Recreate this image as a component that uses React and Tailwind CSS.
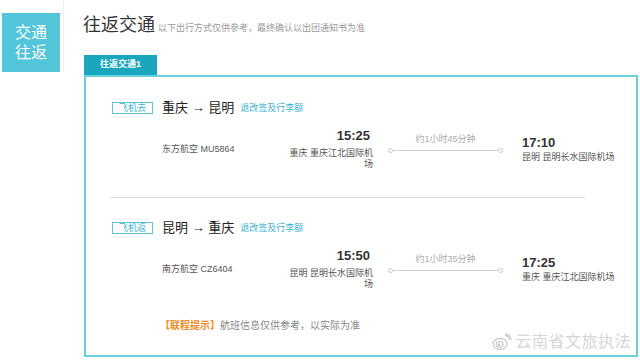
import React from 'react';

const flights = [
  {
    tag: '飞机去',
    route: ['重庆', '昆明'],
    airline: '东方航空 MU5864',
    depTime: '15:25',
    depAirport: '重庆 重庆江北国际机场',
    duration: '约1小时45分钟',
    arrTime: '17:10',
    arrAirport: '昆明 昆明长水国际机场',
  },
  {
    tag: '飞机返',
    route: ['昆明', '重庆'],
    airline: '南方航空 CZ6404',
    depTime: '15:50',
    depAirport: '昆明 昆明长水国际机场',
    duration: '约1小时35分钟',
    arrTime: '17:25',
    arrAirport: '重庆 重庆江北国际机场',
  },
];

function FlightBlock({ f, first }) {
  return (
    <div className={first ? 'h-[121px] pt-[25px] border-b border-[#dedede]' : 'h-[120px] pt-[24px]'}>
      {/* 航线标题 */}
      <div className="flex items-center h-[12px] ml-[2px]">
        <span className="w-[41px] h-[12px] border border-[#5bc5d6] text-[#3bb3c9] text-[9px] leading-[10px] flex items-center justify-center">
          {f.tag}
        </span>
        <span className="ml-[9px] text-[13px] leading-[14px] text-[#222]">
          {f.route[0]} → {f.route[1]}
        </span>
        <span className="ml-[6px] text-[9px] leading-[11px] text-[#3cb4d0]">退改签及行李额</span>
      </div>

      {/* 航班详情 */}
      <div className="flex ml-[52px] mt-[15px]">
        <div className="w-[124px] shrink-0 pt-[15px] text-[9px] leading-[11px] text-[#555]">{f.airline}</div>
        <div className="w-[87px] shrink-0 text-right">
          <div className="text-[13px] leading-[13px] font-bold text-[#333] pr-[3px]">{f.depTime}</div>
          <div className="mt-[6px] text-[9px] leading-[11px] text-[#555]">{f.depAirport}</div>
        </div>
        <div className="ml-[15px] w-[115px] shrink-0 pt-[5px]">
          <div className="text-center text-[9px] leading-[11px] text-[#aaa]">{f.duration}</div>
          <div className="mt-[3px] flex items-center">
            <span className="w-[5px] h-[5px] rounded-full border border-[#c8c8c8] bg-white"></span>
            <span className="flex-1 h-px bg-[#cfcfcf]"></span>
            <span className="w-[5px] h-[5px] rounded-full border border-[#c8c8c8] bg-white"></span>
          </div>
        </div>
        <div className="ml-[19px] shrink-0 whitespace-nowrap pt-[7px]">
          <div className="text-[13px] leading-[13px] font-bold text-[#333]">{f.arrTime}</div>
          <div className="mt-[3px] text-[9px] leading-[11px] text-[#555]">{f.arrAirport}</div>
        </div>
      </div>
    </div>
  );
}

export default function App() {
  return (
    <div
      className="relative w-[640px] h-[361px] bg-white overflow-hidden flex"
      style={{ fontFamily: "'Liberation Sans', 'Noto Sans CJK SC', sans-serif" }}
    >
      {/* 左侧标签 */}
      <div className="w-[84px] shrink-0">
        <div className="w-[64px] h-[72px] pl-[2px] pt-[13px] border-r border-[#eef2f3]">
          <div className="w-[58px] h-[59px] bg-[#52c5da] text-white text-[16px] leading-[20px] flex flex-col items-center justify-center">
            <span>交通</span>
            <span>往返</span>
          </div>
        </div>
      </div>

      {/* 主体 */}
      <div className="w-[554px] flex flex-col">
        <div className="h-[55px] pt-[13px] flex items-baseline -ml-[1px]">
          <span className="text-[18px] leading-[24px] text-[#333]">往返交通</span>
          <span className="ml-[3px] text-[9px] text-[#999]">以下出行方式仅供参考，最终确认以出团通知书为准</span>
        </div>

        <div className="w-[73px] h-[20px] bg-[#1aa7be] text-white text-[9px] font-bold flex items-center justify-center">
          往返交通1
        </div>

        <div className="h-[282px] border-2 border-[#6ccfdc]">
          <div className="ml-[24px] w-[475px]">
            {flights.map((f, i) => (
              <FlightBlock key={f.tag} f={f} first={i === 0} />
            ))}
            <div className="ml-[50px] mt-[2px] text-[10px] leading-[12px]">
              <span className="text-[#f08a24] font-bold">【联程提示】</span>
              <span className="text-[#888]">航班信息仅供参考，以实际为准</span>
            </div>
          </div>
        </div>
      </div>

      {/* 水印 */}
      <div className="absolute right-[9px] bottom-[9px] flex items-center gap-[3px] text-[#d6d6d6]">
        <svg width="20" height="18" viewBox="0 0 20 18" fill="none" stroke="#cccccc" strokeWidth="1.3">
          <ellipse cx="8" cy="11" rx="7" ry="5.5" />
          <ellipse cx="7.5" cy="11.5" rx="3.5" ry="2.8" />
          <circle cx="7" cy="11.8" r="0.9" fill="#cccccc" />
          <path d="M13 2.5a4.5 4.5 0 0 1 4.5 4.5" />
          <path d="M13 0.8a6.5 6.5 0 0 1 6.3 6.2" />
        </svg>
        <span
          className="text-[16px] leading-[20px] tracking-[0.5px]"
          style={{ textShadow: '0 0 1px #fff, 0 0 1px #fff' }}
        >
          云南省文旅执法
        </span>
      </div>
    </div>
  );
}
